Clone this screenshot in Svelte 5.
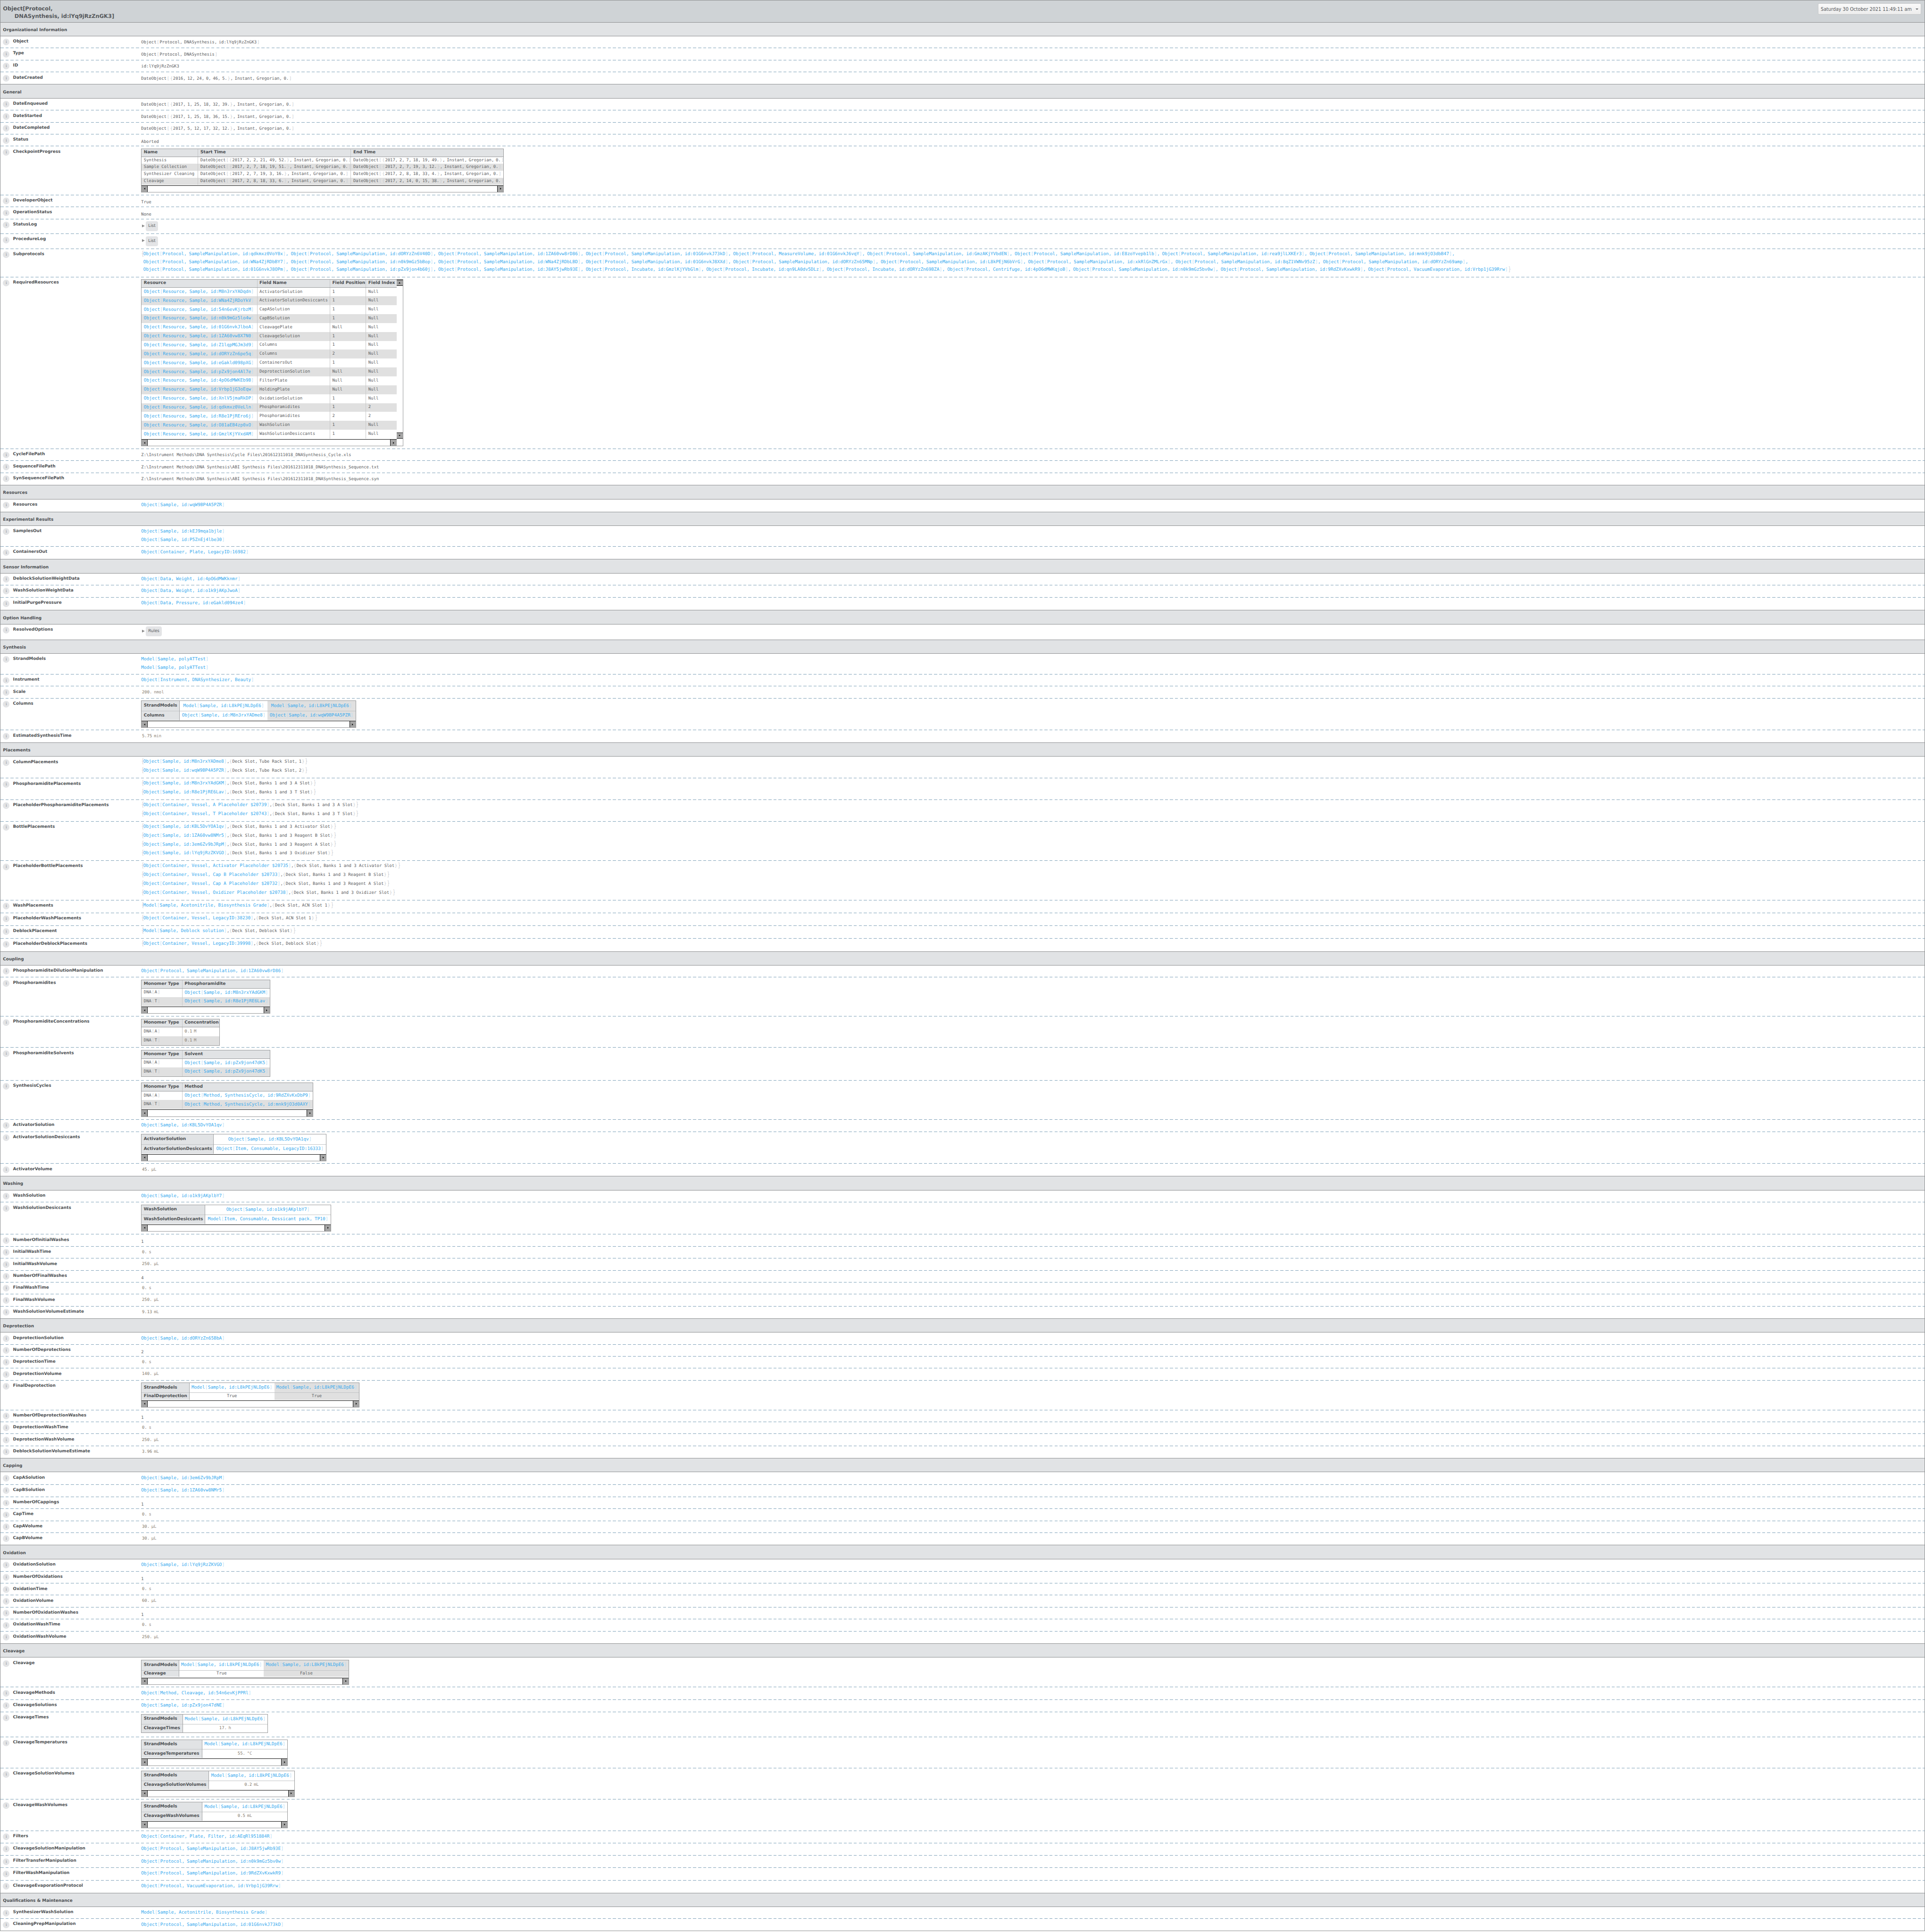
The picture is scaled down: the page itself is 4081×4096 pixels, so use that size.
<script>
  const P = (id, k = 'SampleManipulation') => `Object[Protocol, ${k}, id:${id}]`;
  const vt = (w, head, rows, o = {}) => ({ w, head, rows, mode: 'v', rh: 23, hh: 21, scroll: false, ...o });
  const st = (w, rows, hs, o = {}) => ({ w, rows, hs, mode: 's', scroll: false, ...o });
  const S = (t) => ({ k: 's', t });
  const Y = (t) => ({ k: 'y', t });
  const L = (...lines) => ({ k: 'l', lines });
  const Q = (n, u, c = 'qm') => ({ k: 'q', n, u, c });
  const B = (t) => ({ k: 'b', t });
  const T = (t) => ({ k: 't', t });
  const PL = (...lines) => ({ k: 'p', lines });
  const date = (s) => `DateObject[{${s}}, Instant, Gregorian, 0.]`;
  const ms = 'Model[Sample, id:L8kPEjNLDpE6]';
  const dna = ['DNA[A]', 'DNA[T]'];
  const deck = (s) => `{Deck Slot, ${s}}`;

  const res = [
    ['M8n3rxYADqdn','ActivatorSolution','1','Null'],['WNa4ZjRDoYkV','ActivatorSolutionDesiccants','1','Null'],
    ['54n6evKjrbzM','CapASolution','1','Null'],['n0k9mGz5lo4w','CapBSolution','1','Null'],
    ['01G6nvkJlboA','CleavagePlate','Null','Null'],['1ZA60vw8X7N0','CleavageSolution','1','Null'],
    ['Z1lqpMGJm3d9','Columns','1','Null'],['dORYzZn6pe5q','Columns','2','Null'],
    ['eGakld098pXG','ContainersOut','1','Null'],['pZx9jon4Al7e','DeprotectionSolution','Null','Null'],
    ['4pO6dMWKEb9B','FilterPlate','Null','Null'],['Vrbp1jG3oEqw','HoldingPlate','Null','Null'],
    ['XnlV5jmaRkDP','OxidationSolution','1','Null'],['qdkmxz0VeLln','Phosphoramidites','1','2'],
    ['R8e1PjREro6j','Phosphoramidites','2','2'],['O81aEB4zp0xO','WashSolution','1','Null'],
    ['GmzlKjYVxdAM','WashSolutionDesiccants','1','Null']
  ].map(([id, a, b, c]) => [`Object[Resource, Sample, id:${id}]`, a, b, c]);

  const sub = [
    ['qdkmxz0VoY0x','dORYzZn6V40D','1ZA60vw8rD86','01G6nvkJ73kD',['01G6nvkJ6vqY','MeasureVolume'],'GmzAKjYVbdEN','E8zoYvepb1lb','rea9jlLXKEr3','mnk9jO3dbB47'],
    ['WNa4ZjRDbBY7','n0k9mGz5bBop','WNa4ZjRDbLBD','01G6nvkJ8XXd','dORYzZn65MNp','L8kPEjN6bVrG','xkRlGnZMLrGx','8qZ1VWNv95zZ','dORYzZn69amp'],
    ['01G6nvkJ8OPm','pZx9jon4b60j','J8AY5jwRb93E',['GmzlKjYVbGlm','Incubate'],['qn9LA0dv5DLz','Incubate'],['dORYzZn69BZA','Incubate'],['4pO6dMWKqjoB','Centrifuge'],'n0k9mGz5bv0w','9RdZXvKxwkR9',['Vrbp1jG39Rrw','VacuumEvaporation']]
  ].map((a, i) => a.map((x) => (Array.isArray(x) ? P(x[0], x[1]) : P(x))).join(', ') + (i < 2 ? ',' : ''));

  const raw = [
    { t: 'Organizational Information', end: 94, rows: [
      ['Object', 125, S('Object[Protocol, DNASynthesis, id:lYq9jRzZnGK3]')],
      ['Type', 156, S('Object[Protocol, DNASynthesis]')],
      ['ID', 187.5, S('id:lYq9jRzZnGK3')],
      ['DateCreated', 218, S(date('2016, 12, 24, 0, 46, 5.'))] ] },
    { t: 'General', end: 255, rows: [
      ['DateEnqueued', 286.5, S(date('2017, 1, 25, 18, 32, 39.'))],
      ['DateStarted', 317.5, S(date('2017, 1, 25, 18, 36, 15.'))],
      ['DateCompleted', 348.6, S(date('2017, 5, 12, 17, 32, 12.'))],
      ['Status', 379.5, Y('Aborted')],
      ['CheckpointProgress', 505.4, T(vt([146, 396, 395], ['Name', 'Start Time', 'End Time'], [
        ['Synthesis', date('2017, 2, 2, 21, 49, 52.'), date('2017, 2, 7, 18, 19, 49.')],
        ['Sample Collection', date('2017, 2, 7, 18, 19, 51.'), date('2017, 2, 7, 19, 3, 12.')],
        ['Synthesizer Cleaning', date('2017, 2, 7, 19, 3, 16.'), date('2017, 2, 8, 18, 33, 4.')],
        ['Cleavage', date('2017, 2, 8, 18, 33, 6.'), date('2017, 2, 14, 0, 15, 38.')] ], { rh: 18.1, hh: 20, scroll: true }))],
      ['DeveloperObject', 536.6, Y('True')],
      ['OperationStatus', 567.8, Y('None')],
      ['StatusLog', 606.3, B('List')],
      ['ProcedureLog', 645, B('List')],
      ['Subprotocols', 718, { k: 'sub', lines: sub }],
      ['RequiredResources', 1163.3, T(vt([299, 188.6, 93.4, 79], ['Resource', 'Field Name', 'Field Position', 'Field Index'], res, { rh: 23.05, hh: 20, scroll: true, vs: true }))],
      ['CycleFilePath', 1194.4, S('Z:\\Instrument Methods\\DNA Synthesis\\Cycle Files\\201612311018_DNASynthesis_Cycle.xls')],
      ['SequenceFilePath', 1225.5, S('Z:\\Instrument Methods\\DNA Synthesis\\ABI Synthesis Files\\201612311018_DNASynthesis_Sequence.txt')],
      ['SynSequenceFilePath', 1256.6, S('Z:\\Instrument Methods\\DNA Synthesis\\ABI Synthesis Files\\201612311018_DNASynthesis_Sequence.syn')] ] },
    { t: 'Resources', end: 1293.4, rows: [['Resources', 1325.5, L('Object[Sample, id:wqW9BP4A5PZR]')]] },
    { t: 'Experimental Results', end: 1362.2, rows: [
      ['SamplesOut', 1416.3, L('Object[Sample, id:kEJ9mqa1bjle]', 'Object[Sample, id:P5ZnEj4lbe30]')],
      ['ContainersOut', 1448.5, L('Object[Container, Plate, LegacyID:16982]')] ] },
    { t: 'Sensor Information', end: 1485.7, rows: [
      ['DeblockSolutionWeightData', 1516.3, L('Object[Data, Weight, id:4pO6dMWKknmr]')],
      ['WashSolutionWeightData', 1548.5, L('Object[Data, Weight, id:o1k9jAKpJwoA]')],
      ['InitialPurgePressure', 1580.6, L('Object[Data, Pressure, id:eGakld094ze4]')] ] },
    { t: 'Option Handling', end: 1617.3, rows: [['ResolvedOptions', 1656.6, B('Rules')]] },
    { t: 'Synthesis', end: 1693.4, rows: [
      ['StrandModels', 1747.5, L('Model[Sample, polyATTest]', 'Model[Sample, polyATTest]')],
      ['Instrument', 1778.6, L('Object[Instrument, DNASynthesizer, Beauty]')],
      ['Scale', 1809.7, Q('200.', 'nmol')],
      ['Columns', 1892.3, T(st([98.5, 227.5, 228], [['StrandModels', ms, ms], ['Columns', 'Object[Sample, id:M8n3rxYADme8]', 'Object[Sample, id:wqW9BP4A5PZR]']], [25.6, 24], { scroll: true, shade: true }))],
      ['EstimatedSynthesisTime', 1923.5, Q('5.75', 'min')] ] },
    { t: 'Placements', end: 1960.6, rows: [
      ['ColumnPlacements', 2016.7, PL(['Object[Sample, id:M8n3rxYADme8]', deck('Tube Rack Slot, 1')], ['Object[Sample, id:wqW9BP4A5PZR]', deck('Tube Rack Slot, 2')])],
      ['PhosphoramiditePlacements', 2072.3, PL(['Object[Sample, id:M8n3rxYAdGKM]', deck('Banks 1 and 3 A Slot')], ['Object[Sample, id:R8e1PjRE6Lav]', deck('Banks 1 and 3 T Slot')])],
      ['PlaceholderPhosphoramiditePlacements', 2128.5, PL(['Object[Container, Vessel, A Placeholder $20739]', deck('Banks 1 and 3 A Slot')], ['Object[Container, Vessel, T Placeholder $20743]', deck('Banks 1 and 3 T Slot')])],
      ['BottlePlacements', 2230.5, PL(['Object[Sample, id:KBL5DvYOA1qv]', deck('Banks 1 and 3 Activator Slot')], ['Object[Sample, id:1ZA60vw8NMr5]', deck('Banks 1 and 3 Reagent B Slot')], ['Object[Sample, id:3em6Zv9bJRpM]', deck('Banks 1 and 3 Reagent A Slot')], ['Object[Sample, id:lYq9jRzZKVGO]', deck('Banks 1 and 3 Oxidizer Slot')])],
      ['PlaceholderBottlePlacements', 2332.5, PL(['Object[Container, Vessel, Activator Placeholder $20735]', deck('Banks 1 and 3 Activator Slot')], ['Object[Container, Vessel, Cap B Placeholder $20733]', deck('Banks 1 and 3 Reagent B Slot')], ['Object[Container, Vessel, Cap A Placeholder $20732]', deck('Banks 1 and 3 Reagent A Slot')], ['Object[Container, Vessel, Oxidizer Placeholder $20738]', deck('Banks 1 and 3 Oxidizer Slot')])],
      ['WashPlacements', 2365.7, PL(['Model[Sample, Acetonitrile, Biosynthesis Grade]', deck('ACN Slot 1')])],
      ['PlaceholderWashPlacements', 2398.4, PL(['Object[Container, Vessel, LegacyID:38230]', deck('ACN Slot 1')])],
      ['DeblockPlacement', 2431.5, PL(['Model[Sample, Deblock solution]', deck('Deblock Slot')])],
      ['PlaceholderDeblockPlacements', 2464.7, PL(['Object[Container, Vessel, LegacyID:39998]', deck('Deblock Slot')])] ] },
    { t: 'Coupling', end: 2501.4, rows: [
      ['PhosphoramiditeDilutionManipulation', 2532.6, L(P('1ZA60vw8rD86'))],
      ['Phosphoramidites', 2633.6, T(vt([105, 226.5], ['Monomer Type', 'Phosphoramidite'], [[dna[0], 'Object[Sample, id:M8n3rxYAdGKM]'], [dna[1], 'Object[Sample, id:R8e1PjRE6Lav]']], { scroll: true }))],
      ['PhosphoramiditeConcentrations', 2714.5, T(vt([105, 96.5], ['Monomer Type', 'Concentration'], [[dna[0], '0.1 M'], [dna[1], '0.1 M']]))],
      ['PhosphoramiditeSolvents', 2799.5, T(vt([105, 226.5], ['Monomer Type', 'Solvent'], [[dna[0], 'Object[Sample, id:pZx9jon47dK5]'], [dna[1], 'Object[Sample, id:pZx9jon47dK5]']]))],
      ['SynthesisCycles', 2900.5, T(vt([105, 338.5], ['Monomer Type', 'Method'], [[dna[0], 'Object[Method, SynthesisCycle, id:9RdZXvKxDbP9]'], [dna[1], 'Object[Method, SynthesisCycle, id:mnk9jO3d0AXY]']], { scroll: true }))],
      ['ActivatorSolution', 2932.7, L('Object[Sample, id:KBL5DvYOA1qv]')],
      ['ActivatorSolutionDesiccants', 3015.3, T(st([186.5, 291], [['ActivatorSolution', 'Object[Sample, id:KBL5DvYOA1qv]'], ['ActivatorSolutionDesiccants', 'Object[Item, Consumable, LegacyID:16333]']], [25.5, 23.5], { scroll: true }))],
      ['ActivatorVolume', 3046.4, Q('45.', 'μL', 'qu')] ] },
    { t: 'Washing', end: 3083.7, rows: [
      ['WashSolution', 3115.3, L('Object[Sample, id:o1k9jAKplbY7]')],
      ['WashSolutionDesiccants', 3198.5, T(st([164, 326], [['WashSolution', 'Object[Sample, id:o1k9jAKplbY7]'], ['WashSolutionDesiccants', 'Model[Item, Consumable, Dessicant pack, TP10]']], [25, 23.5], { scroll: true }))],
      ['NumberOfInitialWashes', 3229.6, Y('1')],
      ['InitialWashTime', 3260.7, Q('0.', 's')],
      ['InitialWashVolume', 3291.8, Q('250.', 'μL', 'qu')],
      ['NumberOfFinalWashes', 3322.4, Y('4')],
      ['FinalWashTime', 3353.6, Q('0.', 's')],
      ['FinalWashVolume', 3384.7, Q('250.', 'μL', 'qu')],
      ['WashSolutionVolumeEstimate', 3415.3, Q('9.13', 'mL')] ] },
    { t: 'Deprotection', end: 3452.6, rows: [
      ['DeprotectionSolution', 3483.7, L('Object[Sample, id:dORYzZn65BbA]')],
      ['NumberOfDeprotections', 3514.4, Y('2')],
      ['DeprotectionTime', 3545.5, Q('0.', 's')],
      ['DeprotectionVolume', 3576.6, Q('140.', 'μL', 'qu')],
      ['FinalDeprotection', 3653.7, T(st([123, 221, 219], [['StrandModels', ms, ms], ['FinalDeprotection', 'True', 'True']], [25, 18.2], { scroll: true, shade: true }))],
      ['NumberOfDeprotectionWashes', 3684.3, Y('1')],
      ['DeprotectionWashTime', 3715.4, Q('0.', 's')],
      ['DeprotectionWashVolume', 3746.5, Q('250.', 'μL', 'qu')],
      ['DeblockSolutionVolumeEstimate', 3777.7, Q('3.96', 'mL')] ] },
    { t: 'Capping', end: 3814.4, rows: [
      ['CapASolution', 3846.5, L('Object[Sample, id:3em6Zv9bJRpM]')],
      ['CapBSolution', 3878.7, L('Object[Sample, id:1ZA60vw8NMr5]')],
      ['NumberOfCappings', 3909.3, Y('1')],
      ['CapTime', 3940.4, Q('0.', 's')],
      ['CapAVolume', 3971.5, Q('30.', 'μL', 'qu')],
      ['CapBVolume', 4002.6, Q('30.', 'μL', 'qu')] ] },
    { t: 'Oxidation', end: 4039.4, rows: [
      ['OxidationSolution', 4071.5, L('Object[Sample, id:lYq9jRzZKVGO]')],
      ['NumberOfOxidations', 4102.7, Y('1')],
      ['OxidationTime', 4133.3, Q('0.', 's')],
      ['OxidationVolume', 4164.4, Q('60.', 'μL', 'qu')],
      ['NumberOfOxidationWashes', 4195.5, Y('1')],
      ['OxidationWashTime', 4226.6, Q('0.', 's')],
      ['OxidationWashVolume', 4257.6, Q('250.', 'μL', 'qu')] ] },
    { t: 'Cleavage', end: 4294.6, rows: [
      ['Cleavage', 4371.6, T(st([97, 219.5, 220], [['StrandModels', ms, ms], ['Cleavage', 'True', 'False']], [25.8, 17.5], { scroll: true, shade: true }))],
      ['CleavageMethods', 4403.7, L('Object[Method, Cleavage, id:54n6evKjPPRl]')],
      ['CleavageSolutions', 4435.4, L('Object[Sample, id:pZx9jon47dNE]')],
      ['CleavageTimes', 4500.7, T(st([106, 220], [['StrandModels', ms], ['CleavageTimes', '17. h']], [24.8, 22]))],
      ['CleavageTemperatures', 4581.6, T(st([156.5, 221], [['StrandModels', ms], ['CleavageTemperatures', '55. °C']], [24.9, 22.4], { scroll: true }))],
      ['CleavageSolutionVolumes', 4662.5, T(st([174, 221], [['StrandModels', ms], ['CleavageSolutionVolumes', '0.2 mL']], [24.8, 22.4], { scroll: true }))],
      ['CleavageWashVolumes', 4743.4, T(st([156.5, 221], [['StrandModels', ms], ['CleavageWashVolumes', '0.5 mL']], [24.9, 22.4], { scroll: true }))],
      ['Filters', 4775.6, L('Object[Container, Plate, Filter, id:AEqRl951884R]')],
      ['CleavageSolutionManipulation', 4807.7, L(P('J8AY5jwRb93E'))],
      ['FilterTransferManipulation', 4839.4, L(P('n0k9mGz5bv0w'))],
      ['FilterWashManipulation', 4871.6, L(P('9RdZXvKxwkR9'))],
      ['CleavageEvaporationProtocol', 4903.7, L(P('Vrbp1jG39Rrw', 'VacuumEvaporation'))] ] },
    { t: 'Qualifications & Maintenance', end: 4940.8, rows: [
      ['SynthesizerWashSolution', 4971.5, L('Model[Sample, Acetonitrile, Biosynthesis Grade]')],
      ['CleaningPrepManipulation', 5002.7, L(P('01G6nvkJ73kD'))] ] }
  ];

  let prev = 57;
  const sections = raw.map((s) => {
    const h = s.end - prev;
    prev = s.end;
    const rows = s.rows.map(([label, end, v]) => {
      const rh = end - prev;
      prev = end;
      return { label, h: rh, v };
    });
    return { t: s.t, h, rows };
  });

  function tokens(t) {
    return t.split(/([[\]{}]|, )/).filter(Boolean).map((x) => ({
      x,
      c: /^[[\]{}]$/.test(x) ? 'br' : x === ', ' ? 'cm' : ''
    }));
  }
  const isLink = (t) => /^(Object|Model)\[/.test(t);
  const isQty = (t) => /^[\d.]+ ?(M|mL|h|°C)$/.test(t);
  const sumw = (w) => w.reduce((a, b) => a + b, 0);
</script>

{#snippet txt(t)}{#each tokens(t) as k}<span class={k.c}>{k.x}</span>{/each}{/snippet}

{#snippet cell(t)}
  {#if isLink(t)}<span class="lnk">{@render txt(t)}</span>
  {:else if isQty(t)}<span class="qty">{t.split(' ')[0]} <i>{t.split(' ')[1]}</i></span>
  {:else}{@render txt(t)}{/if}
{/snippet}

{#snippet hbar(width)}
  <div class="hs" style="width:{width}px">
    <span class="sb lft"><b class="tl"></b></span>
    <span class="track"></span>
    <span class="sb rgt"><b class="tr"></b></span>
  </div>
{/snippet}

{#snippet table(t)}
  <div class="frame">
    <div class="tr-wrap">
      <table style="width:{sumw(t.w)}px">
        <colgroup>{#each t.w as w}<col style="width:{w}px" />{/each}</colgroup>
        {#if t.mode === 'v'}
          <thead>
            <tr style="height:{t.hh}px">{#each t.head as h}<th>{h}</th>{/each}</tr>
          </thead>
          <tbody>
            {#each t.rows as r, i}
              <tr class:alt={i % 2} style="height:{t.rh}px">{#each r as c}<td>{@render cell(c)}</td>{/each}</tr>
            {/each}
          </tbody>
        {:else}
          <tbody class="side">
            {#each t.rows as r, i}
              <tr style="height:{t.hs[i]}px">
                <th>{r[0]}</th>
                {#each r.slice(1) as c, j}<td class:alt={t.shade && j === 1}>{@render cell(c)}</td>{/each}
              </tr>
            {/each}
          </tbody>
        {/if}
      </table>
      {#if t.vs}
        <div class="vs">
          <span class="sb up"><b class="tu"></b></span>
          <span class="vtrack"></span>
          <span class="sb dn"><b class="td"></b></span>
        </div>
      {/if}
    </div>
    {#if t.scroll}{@render hbar(sumw(t.w))}{/if}
  </div>
{/snippet}

<div class="page">
  <header class="top">
    <div class="title">
      <div>Object[Protocol,</div>
      <div class="ind">DNASynthesis, id:lYq9jRzZnGK3]</div>
    </div>
    <button class="date">Saturday 30 October 2021 11:49:11 am<span class="caret"></span></button>
  </header>

  {#each sections as s}
    <section>
      <h2 style="height:{s.h}px">{s.t}</h2>
      {#each s.rows as r}
        <div class="row" style="height:{r.h}px">
          <div class="key"><span class="info">i</span><span class="lab">{r.label}</span></div>
          <div class="val {r.v.k}">
            {#if r.v.k === 's' || r.v.k === 'y'}
              {@render txt(r.v.t)}
            {:else if r.v.k === 'q'}
              <span class="qty {r.v.c}">{r.v.n} <i>{r.v.u}</i></span>
            {:else if r.v.k === 'l'}
              {#each r.v.lines as l}<div class="lnk ln">{@render txt(l)}</div>{/each}
            {:else if r.v.k === 'b'}
              <span class="arrow"></span><span class="btn">{r.v.t}</span>
            {:else if r.v.k === 'p'}
              {#each r.v.lines as l}
                <div class="pl"><span class="tall">{'{'}</span><span class="lnk">{@render txt(l[0])}</span><span class="cm">, </span>{@render txt(l[1])}<span class="tall">{'}'}</span></div>
              {/each}
            {:else if r.v.k === 'sub'}
              {#each r.v.lines as l, i}
                <div class="lnk sl">
                  <span class="tall lead" class:hid={i !== 0}>{'{'}</span>{@render txt(l)}{#if i === 2}<span class="tall">{'}'}</span>{/if}
                </div>
              {/each}
            {:else if r.v.k === 't'}
              {@render table(r.v.t)}
            {/if}
          </div>
        </div>
      {/each}
    </section>
  {/each}
</div>

<style>
  :global(body) { margin: 0; background: #fff; }
  .page {
    zoom: 0.8185;
    width: 4986px;
    box-sizing: border-box;
    border-left: 1.5px solid #8d8f91;
    border-right: 1.5px solid #8d8f91;
    font-family: "DejaVu Sans", sans-serif;
    color: #4c4f52;
    text-rendering: geometricPrecision;
    background: #fff;
  }
  .top {
    height: 57px;
    box-sizing: border-box;
    background: #cfd3d6;
    border-top: 1.5px solid #8d8f91;
    display: flex;
    justify-content: space-between;
    padding: 12.5px 8px 0 6.5px;
  }
  .title { font-size: 14px; line-height: 19px; font-weight: 700; color: #54575a; }
  .ind { padding-left: 30px; }
  .date {
    height: 29px;
    width: 268px;
    margin: -5px 0 0;
    box-sizing: border-box;
    border: 1px solid #c6c8ca;
    border-radius: 3px;
    background: linear-gradient(#fafafa, #ececec);
    font: 11.8px "DejaVu Sans", sans-serif;
    color: #55585b;
    display: flex;
    align-items: center;
    padding: 0 0 0 6px;
    white-space: nowrap;
  }
  .caret {
    margin-left: auto;
    margin-right: 7px;
    border: 4px solid transparent;
    border-top: 4px solid #606366;
    border-bottom: 0;
  }
  h2 {
    margin: 0;
    box-sizing: border-box;
    background: #e1e3e5;
    border-top: 1.5px solid #8d8f91;
    border-bottom: 1.5px solid #8d8f91;
    font-size: 10.9px;
    font-weight: 700;
    color: #4c4f52;
    display: flex;
    align-items: center;
    padding: 5px 0 0 6.5px;
  }
  section:last-child .row:last-child { border-bottom: 1.5px solid #8d8f91; box-sizing: border-box; }
  .row {
    display: grid;
    grid-template-columns: 364.5px 1fr;
    background: repeating-linear-gradient(90deg, #7fa2b9 0 8px, transparent 8px 13px) left bottom / 100% 1.3px no-repeat;
  }
  .row:last-child { background: none; }
  .key { display: flex; align-items: flex-start; padding-left: 6.5px; }
  .info {
    flex: none;
    width: 17px;
    height: 17px;
    margin-top: 6.7px;
    border-radius: 50%;
    background: #e3e4e6;
    color: #8e9194;
    font: 10px/17px "DejaVu Serif", serif;
    text-align: center;
  }
  .lab { margin-left: 9px; font-size: 10.9px; line-height: 16px; font-weight: 700; padding-top: 6.3px; color: #4c4f52; white-space: nowrap; }
  .val {
    font-family: "DejaVu Sans Mono", monospace;
    font-size: 10.9px;
    line-height: 16px;
    color: #5d6063;
    white-space: nowrap;
    min-width: 0;
  }
  .val.s { padding-top: 9px; }
  .val.y { padding-top: 12px; }
  .val.q { padding: 7.4px 0 0 2px; }
  .val.l { padding-top: 4px; }
  .val.b { display: flex; align-items: flex-start; padding-top: 5.6px; }
  .val.p { padding-top: 2.5px; }
  .val.t { padding-top: 5.5px; }
  .val.sub { padding-top: 4px; }
  .ln { line-height: 22px; }
  .pl { line-height: 23px; }
  .sl { line-height: 20.4px; }
  .lnk { color: #38aaee; font-size: 11.6px; }
  .br { color: #c8ccd0; padding: 0 0.95px; }
  .lnk .br { color: #b7dcf5; padding: 0 0.3px; }
  .cm { letter-spacing: -1.05px; }
  .lnk .cm { letter-spacing: -0.5px; }
  .qty { color: #85796a; }
  .qty i { font-style: normal; color: #93897d; margin-left: -2px; }
  .tall {
    font-family: "DejaVu Sans", sans-serif;
    font-size: 17px;
    line-height: 0;
    font-weight: 400;
    color: #c6c9cc;
    vertical-align: -1px;
    display: inline-block;
    transform: scaleX(0.55);
    width: 5.5px;
    text-align: center;
  }
  .hid { visibility: hidden; }
  .arrow {
    flex: none;
    margin: 8px 3px 0 2px;
    border-left: 8px solid #8c8c8c;
    border-top: 4px solid transparent;
    border-bottom: 4px solid transparent;
  }
  .btn {
    height: 25.7px;
    box-sizing: border-box;
    padding: 0 6px;
    border-radius: 5px;
    background: #e3e4e6;
    font-family: "DejaVu Sans", sans-serif;
    font-size: 10.7px;
    line-height: 25.7px;
    color: #5a5d60;
  }

  .frame {
    width: max-content;
    border: 1.5px solid #98999a;
    background: #fff;
  }
  .tr-wrap { display: flex; align-items: stretch; }
  table { table-layout: fixed; border-collapse: collapse; }
  th, td { padding: 0 0 0 5.5px; overflow: hidden; white-space: nowrap; box-sizing: border-box; }
  th {
    background: #e1e3e5;
    font-family: "DejaVu Sans", sans-serif;
    font-size: 11.1px;
    font-weight: 700;
    text-align: left;
    color: #4c4f52;
  }
  thead th { border-bottom: 1.5px solid #999b9d; border-left: 1px solid #c4c6c8; }
  thead th:first-child { border-left: 0; }
  td { color: #5d6063; border-left: 1px solid #c8c8c8; }
  td:first-child { border-left: 0; }
  tr.alt td, td.alt { background: #e0e0e0; }
  .side th { border-right: 1px solid #a0a2a4; }
  .side td { text-align: center; padding: 0; border-left: 0; }
  .side tr + tr th, .side tr + tr td { border-top: 1px solid #c2c4c6; }

  .hs {
    display: flex;
    height: 16px;
    margin-top: 1.5px;
    border-top: 1.5px solid #111;
    box-sizing: content-box;
  }
  .track { flex: 1; }
  .sb { flex: none; width: 16px; background: #a6a6a6; display: flex; align-items: center; justify-content: center; box-sizing: border-box; }
  .lft { border-right: 1.5px solid #111; }
  .rgt { border-left: 1.5px solid #111; }
  .tl { border-right: 4px solid #111; border-top: 3px solid transparent; border-bottom: 3px solid transparent; }
  .tr { border-left: 4px solid #111; border-top: 3px solid transparent; border-bottom: 3px solid transparent; }
  .vs { display: flex; flex-direction: column; width: 16px; }
  .vtrack { flex: 1; }
  .up, .dn { height: 16px; }
  .up { border-top: 1.5px solid #111; border-bottom: 1.5px solid #111; }
  .dn { border-top: 1.5px solid #111; border-bottom: 1.5px solid #111; }
  .tu { border-bottom: 4px solid #111; border-left: 3px solid transparent; border-right: 3px solid transparent; }
  .td { border-top: 4px solid #111; border-left: 3px solid transparent; border-right: 3px solid transparent; }
</style>
